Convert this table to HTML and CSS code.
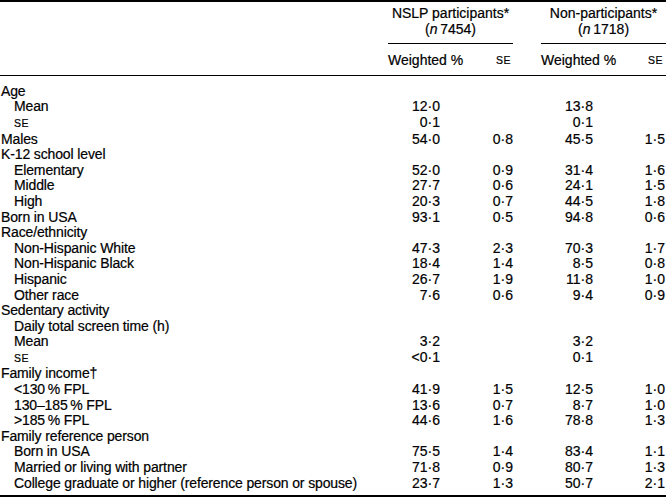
FILE: index.html
```html
<!DOCTYPE html>
<html lang="en">
<head>
<meta charset="utf-8">
<title>NSLP participants table</title>
<link rel="stylesheet" href="styles.css">
</head>
<body>
<table class="tbl">
  <colgroup>
    <col class="c-label">
    <col class="c-w1">
    <col class="c-s1">
    <col class="c-w2">
    <col class="c-s2">
  </colgroup>
  <thead>
    <tr class="hd1">
      <th class="lbl" rowspan="2"></th>
      <th colspan="2" class="grp"><div class="grp-in grp-a">NSLP participants*<br>(<i>n</i>&#8201;7454)</div></th>
      <th colspan="2" class="grp"><div class="grp-in grp-b">Non-participants*<br>(<i>n</i>&#8201;1718)</div></th>
    </tr>
    <tr class="hd2">
      <th class="w">Weighted %</th>
      <th class="s"><span class="sc">SE</span></th>
      <th class="w">Weighted %</th>
      <th class="s s-last"><span class="sc">SE</span></th>
    </tr>
  </thead>
  <tbody>
    <tr class="first"><td class="lbl">Age</td><td></td><td></td><td></td><td></td></tr>
    <tr><td class="lbl ind">Mean</td><td class="v1">12·0</td><td class="v2"></td><td class="v3">13·8</td><td class="v4"></td></tr>
    <tr><td class="lbl ind"><span class="sc">SE</span></td><td class="v1">0·1</td><td class="v2"></td><td class="v3">0·1</td><td class="v4"></td></tr>
    <tr><td class="lbl">Males</td><td class="v1">54·0</td><td class="v2">0·8</td><td class="v3">45·5</td><td class="v4">1·5</td></tr>
    <tr><td class="lbl">K-12 school level</td><td></td><td></td><td></td><td></td></tr>
    <tr><td class="lbl ind">Elementary</td><td class="v1">52·0</td><td class="v2">0·9</td><td class="v3">31·4</td><td class="v4">1·6</td></tr>
    <tr><td class="lbl ind">Middle</td><td class="v1">27·7</td><td class="v2">0·6</td><td class="v3">24·1</td><td class="v4">1·5</td></tr>
    <tr><td class="lbl ind">High</td><td class="v1">20·3</td><td class="v2">0·7</td><td class="v3">44·5</td><td class="v4">1·8</td></tr>
    <tr><td class="lbl">Born in USA</td><td class="v1">93·1</td><td class="v2">0·5</td><td class="v3">94·8</td><td class="v4">0·6</td></tr>
    <tr><td class="lbl">Race/ethnicity</td><td></td><td></td><td></td><td></td></tr>
    <tr><td class="lbl ind">Non-Hispanic White</td><td class="v1">47·3</td><td class="v2">2·3</td><td class="v3">70·3</td><td class="v4">1·7</td></tr>
    <tr><td class="lbl ind">Non-Hispanic Black</td><td class="v1">18·4</td><td class="v2">1·4</td><td class="v3">8·5</td><td class="v4">0·8</td></tr>
    <tr><td class="lbl ind">Hispanic</td><td class="v1">26·7</td><td class="v2">1·9</td><td class="v3">11·8</td><td class="v4">1·0</td></tr>
    <tr><td class="lbl ind">Other race</td><td class="v1">7·6</td><td class="v2">0·6</td><td class="v3">9·4</td><td class="v4">0·9</td></tr>
    <tr><td class="lbl">Sedentary activity</td><td></td><td></td><td></td><td></td></tr>
    <tr><td class="lbl ind">Daily total screen time (h)</td><td></td><td></td><td></td><td></td></tr>
    <tr><td class="lbl ind">Mean</td><td class="v1">3·2</td><td class="v2"></td><td class="v3">3·2</td><td class="v4"></td></tr>
    <tr><td class="lbl ind"><span class="sc">SE</span></td><td class="v1">&lt;0·1</td><td class="v2"></td><td class="v3">0·1</td><td class="v4"></td></tr>
    <tr><td class="lbl">Family income†</td><td></td><td></td><td></td><td></td></tr>
    <tr><td class="lbl ind">&lt;130&#8201;% FPL</td><td class="v1">41·9</td><td class="v2">1·5</td><td class="v3">12·5</td><td class="v4">1·0</td></tr>
    <tr><td class="lbl ind">130–185&#8201;% FPL</td><td class="v1">13·6</td><td class="v2">0·7</td><td class="v3">8·7</td><td class="v4">1·0</td></tr>
    <tr><td class="lbl ind">&gt;185&#8201;% FPL</td><td class="v1">44·6</td><td class="v2">1·6</td><td class="v3">78·8</td><td class="v4">1·3</td></tr>
    <tr><td class="lbl">Family reference person</td><td></td><td></td><td></td><td></td></tr>
    <tr><td class="lbl ind">Born in USA</td><td class="v1">75·5</td><td class="v2">1·4</td><td class="v3">83·4</td><td class="v4">1·1</td></tr>
    <tr><td class="lbl ind">Married or living with partner</td><td class="v1">71·8</td><td class="v2">0·9</td><td class="v3">80·7</td><td class="v4">1·3</td></tr>
    <tr class="last"><td class="lbl ind">College graduate or higher (reference person or spouse)</td><td class="v1">23·7</td><td class="v2">1·3</td><td class="v3">50·7</td><td class="v4">2·1</td></tr>
  </tbody>
</table>
</body>
</html>
```

FILE: styles.css
```css
html, body {
  margin: 0;
  padding: 0;
  background: #ffffff;
}

.tbl {
  width: 666px;
  border-collapse: collapse;
  table-layout: fixed;
  font-family: "Liberation Sans", Arial, sans-serif;
  font-size: 14px;
  line-height: 15.6px;
  color: #000000;
  -webkit-text-stroke: 0.2px #000;
  border-top: 2px solid #000;
  border-bottom: 2px solid #000;
}

.c-label { width: 388px; }
.c-w1 { width: 87px; }
.c-s1 { width: 66px; }
.c-w2 { width: 87px; }
.c-s2 { width: 38px; }

th, td {
  padding: 0;
  font-weight: normal;
  white-space: nowrap;
}

.hd1 th {
  padding-top: 4px;
  vertical-align: top;
}

.grp-in {
  text-align: center;
  padding-bottom: 6px;
  border-bottom: 1px solid #000;
}

.grp-a { margin-right: 28px; }

.hd2 {
  border-bottom: 1px solid #000;
}

.hd2 th {
  padding-top: 8px;
  padding-bottom: 6px;
}

.hd2 .w { text-align: left; }
.hd2 .s { text-align: right; padding-right: 30px; }
.hd2 .s-last { padding-right: 3px; }

.sc {
  font-size: 10.5px;
  letter-spacing: 0.5px;
}

.lbl { text-align: left; padding-left: 1px; letter-spacing: -0.13px; }
.ind { padding-left: 14px; }

.v1, .v2, .v3, .v4 { text-align: right; }
.v1 { padding-right: 35px; }
.v2 { padding-right: 28px; }
.v3 { padding-right: 35px; }
.v4 { padding-right: 1px; }

tr.first td { padding-top: 8px; }
tr.last td { padding-bottom: 4px; }
```
